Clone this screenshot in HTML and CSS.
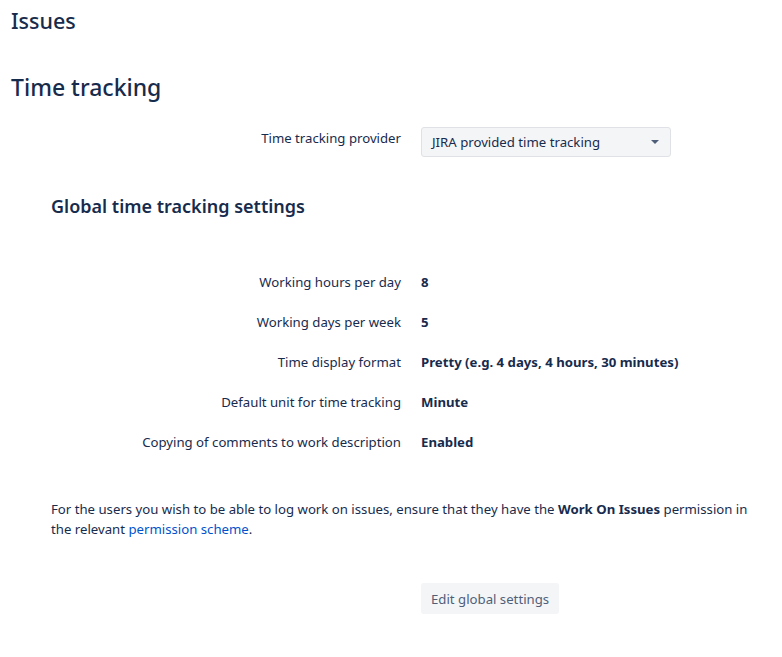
FILE: index.html
```html
<!DOCTYPE html>
<html lang="en">
<head>
    <meta charset="UTF-8">
    <title>Time tracking</title>
    <link rel="stylesheet" href="styles.css">
</head>
<body>
    <div class="page">
        <h1 class="page-title">Issues</h1>

        <h2 class="section-title">Time tracking</h2>

        <form class="provider-form">
            <div class="field field-top">
                <label class="field-label">Time tracking provider</label>
                <div class="select">
                    <span>JIRA provided time tracking</span>
                    <span class="caret"></span>
                </div>
            </div>
        </form>

        <div class="global">
            <h3 class="global-title">Global time tracking settings</h3>

            <div class="settings">
                <div class="field">
                    <span class="field-label">Working hours per day</span>
                    <span class="field-value">8</span>
                </div>
                <div class="field">
                    <span class="field-label">Working days per week</span>
                    <span class="field-value">5</span>
                </div>
                <div class="field">
                    <span class="field-label">Time display format</span>
                    <span class="field-value">Pretty (e.g. 4 days, 4 hours, 30 minutes)</span>
                </div>
                <div class="field">
                    <span class="field-label">Default unit for time tracking</span>
                    <span class="field-value">Minute</span>
                </div>
                <div class="field">
                    <span class="field-label">Copying of comments to work description</span>
                    <span class="field-value">Enabled</span>
                </div>
            </div>

            <p class="note">For the users you wish to be able to log work on issues, ensure that they have the <strong>Work On Issues</strong> permission in the relevant <a href="#">permission scheme</a>.</p>

            <div class="field actions">
                <span class="field-label"></span>
                <button class="button">Edit global settings</button>
            </div>
        </div>
    </div>
</body>
</html>
```

FILE: styles.css
```css
body {
    margin: 0;
    padding: 0;
    font-family: "Noto Sans", Arial, sans-serif;
    font-size: 13.2px;
    line-height: 20px;
    color: #172b4d;
    background-color: #fff;
}
.page {
    padding: 6px 11px 0 11px;
}
.page-title {
    margin: 0;
    font-size: 21.5px;
    line-height: 30px;
    font-weight: 500;
}
.section-title {
    margin: 35px 0 0 0;
    font-size: 23px;
    line-height: 32px;
    font-weight: 500;
}
.provider-form {
    margin-top: 24px;
}
.field {
    display: flex;
    align-items: center;
    gap: 20px;
}
.field-top {
    align-items: flex-start;
}
.field-top .field-label {
    padding-top: 1px;
}
.field-label {
    width: 390px;
    flex-shrink: 0;
    text-align: right;
    color: #172b4d;
}
.select {
    width: 250px;
    height: 30px;
    box-sizing: border-box;
    display: flex;
    align-items: center;
    justify-content: space-between;
    padding: 0 10px;
    background-color: #f4f5f7;
    border: 1px solid #dfe1e6;
    border-radius: 3px;
    color: #172b4d;
}
.caret {
    width: 0;
    height: 0;
    border-left: 4px solid transparent;
    border-right: 4px solid transparent;
    border-top: 4px solid #505f79;
    margin-right: 1px;
}
.global {
    padding-left: 40px;
}
.global-title {
    margin: 36px 0 0 0;
    font-size: 18px;
    line-height: 26px;
    font-weight: 600;
}
.global .field-label {
    width: 350px;
}
.settings {
    margin-top: 53px;
    display: flex;
    flex-direction: column;
    gap: 20px;
}
.field-value {
    font-weight: 700;
}
.note {
    margin: 47px 0 0 0;
    padding-right: 8px;
}
.note a {
    color: #0052cc;
    text-decoration: none;
}
.actions {
    margin-top: 44px;
}
.button {
    font-family: inherit;
    font-size: 13.2px;
    height: 31px;
    padding: 0 10px;
    border: none;
    border-radius: 3px;
    background-color: #f4f5f7;
    color: #505f79;
    cursor: pointer;
}
```
